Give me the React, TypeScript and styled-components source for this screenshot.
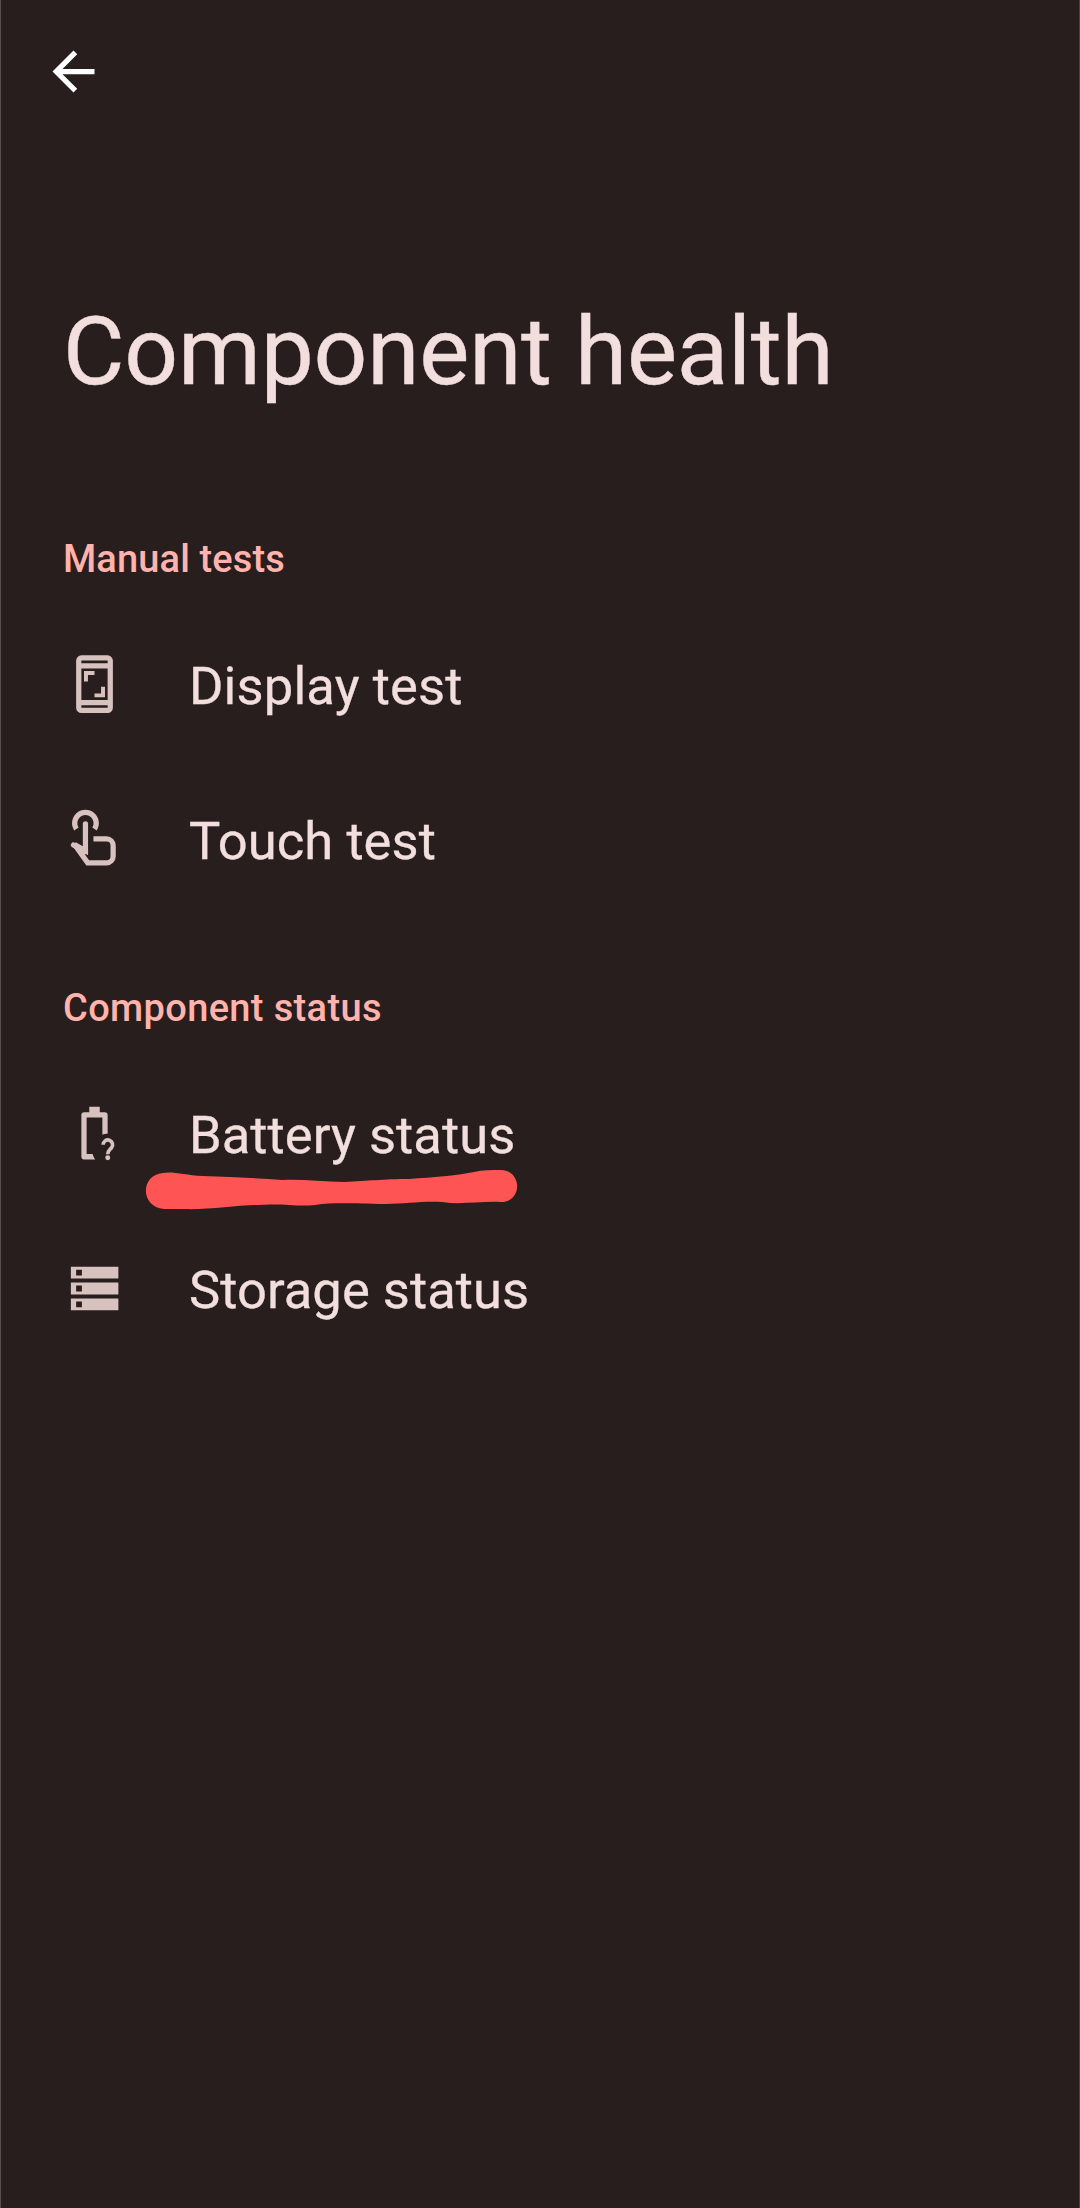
import React from "react";
import styled, { createGlobalStyle } from "styled-components";

const GlobalStyle = createGlobalStyle`
  * { box-sizing: border-box; }
  body { margin: 0; background: #271e1d; }
`;

const Screen = styled.main`
  min-height: 2208px;
  width: 1080px;
  background: #271e1d;
  border-left: 1px solid #574f4e;
  border-right: 1px solid #4a4241;
  font-family: Roboto, "Liberation Sans", sans-serif;
  color: #f2dedc;
`;

const Toolbar = styled.header`
  height: 144px;
  padding: 40px 0 0 41px;
`;

const BackButton = styled.button`
  display: block;
  width: 63px;
  height: 63px;
  padding: 0;
  border: 0;
  background: none;
  color: #fff;
`;

const Title = styled.h1`
  margin: 0;
  padding: 152px 0 0 62px;
  font-size: 94.5px;
  line-height: 112px;
  font-weight: 400;
  letter-spacing: -0.2px;
  -webkit-text-stroke: 0.4px currentColor;
  white-space: nowrap;
`;

const Section = styled.section<{ $top: number }>`
  padding: ${(p) => p.$top}px 0 0 62px;
`;

const SectionTitle = styled.h2<{ $spacing: number }>`
  margin: 0 0 23px;
  height: 48px;
  line-height: 48px;
  font-size: 38px;
  font-weight: 500;
  letter-spacing: ${(p) => p.$spacing}px;
  color: #ffb3ac;
  white-space: nowrap;
`;

const List = styled.ul`
  margin: 0;
  padding: 0;
  list-style: none;
`;

const Row = styled.li`
  position: relative;
  display: flex;
  align-items: center;
  height: 155px;
`;

const Icon = styled.svg`
  display: block;
  width: 63px;
  height: 63px;
  flex: none;
`;

const RowIcon = styled(Icon)`
  margin-top: 2px;
`;

const Label = styled.span<{ $spacing?: number }>`
  margin-left: 63px;
  padding-top: 4px;
  font-size: 52.5px;
  line-height: 62px;
  letter-spacing: ${(p) => p.$spacing ?? 0.05}px;
  -webkit-text-stroke: 0.3px currentColor;
  white-space: nowrap;
`;

const Marker = styled.svg`
  position: absolute;
  left: 82px;
  top: 114px;
  width: 374px;
  height: 42px;
`;

const tint = "#d8c2bf";

export default function App() {
  return (
    <>
      <GlobalStyle />
      <Screen>
        <Toolbar>
          <BackButton aria-label="Back">
            <Icon viewBox="0 0 24 24" fill="currentColor">
              <path d="M20 11H7.83l5.59-5.59L12 4l-8 8 8 8 1.41-1.41L7.83 13H20v-2z" />
            </Icon>
          </BackButton>
        </Toolbar>
        <Title>Component health</Title>
        <Section $top={127}>
          <SectionTitle $spacing={0.13}>Manual tests</SectionTitle>
          <List>
            <Row>
              <RowIcon viewBox="0 0 24 24" fill={tint} fillRule="evenodd">
                <path d="M7 .9h10a2 2 0 0 1 2 2v18a2 2 0 0 1-2 2H7a2 2 0 0 1-2-2v-18a2 2 0 0 1 2-2zM7 2.900v1h10v-1zM7 5.900v12h10v-12zM7 19.900v1h10v-1z" />
                <path d="M8 6.900h4v1.500H9.500v2.500H8zM16 16.900h-4v-1.500h2.500v-2.500H16z" />
              </RowIcon>
              <Label $spacing={0.15}>Display test</Label>
            </Row>
            <Row>
              <RowIcon viewBox="0 0 24 24" fill="none" stroke={tint} strokeWidth="2">
                <path d="M5.100 8a4.100 4.100 0 1 1 6.900 0" />
                <path d="M8.550 6v10.300L4.400 13.900 9.400 20.900H16.600a2.500 2.500 0 0 0 2.500-2.500v-4.100a2.500 2.500 0 0 0-2.500-2.500h-5" />
                <circle cx="8.550" cy="6" r="1" fill={tint} stroke="none" />
                <path d="M4 14.100l4.550 2.500" strokeLinecap="round" />
              </RowIcon>
              <Label>Touch test</Label>
            </Row>
          </List>
        </Section>
        <Section $top={68}>
          <SectionTitle $spacing={0.35}>Component status</SectionTitle>
          <List>
            <Row>
              <RowIcon viewBox="0 0 24 24" fill={tint}>
                <path d="M10 1.800h4v2.100h2c.6 0 1 .4 1 1v7.200c-.8 0-1.400.1-2 .4V5.900H9v13.900h2.300c.2.800.5 1.400 1 2.100H8c-.6 0-1-.4-1-1v-16c0-.6.4-1 1-1h2z" />
                <path d="M15.300 16.300a1.800 1.800 0 1 1 3.200 1.100c-.8.900-1.450 1.200-1.450 2.500" fill="none" stroke={tint} strokeWidth="1.400" />
                <circle cx="17.050" cy="21.200" r=".95" />
              </RowIcon>
              <Label>Battery status</Label>
              <Marker viewBox="0 0 374 42" fill="#ff5454">
                <path d="M18 4C28 2 39 6 58 7C85 8 111 9 137 11C157 10 178 13 199 13C224 12 237 10 264 10C289 8 310 7 329 3C338 1 347 1 356 1C377 1 378 33 356 33C335 32 316 36 297 33C276 32 261 35 240 35C211 35 192 33 170 36C151 38 139 34 113 36C91 36 63 41 39 40H19C-5 38-5 6 18 4Z" />
              </Marker>
            </Row>
            <Row>
              <RowIcon viewBox="0 0 24 24" fill={tint} fillRule="evenodd">
                <path d="M3 3.700h18.100v4.500H3zM5 4.850v2.200h2.200v-2.200zM3 9.750h18.100v4.500H3zM5 10.900v2.200h2.200v-2.200zM3 15.800h18.100v4.500H3zM5 16.950v2.200h2.200v-2.200z" />
              </RowIcon>
              <Label>Storage status</Label>
            </Row>
          </List>
        </Section>
      </Screen>
    </>
  );
}
